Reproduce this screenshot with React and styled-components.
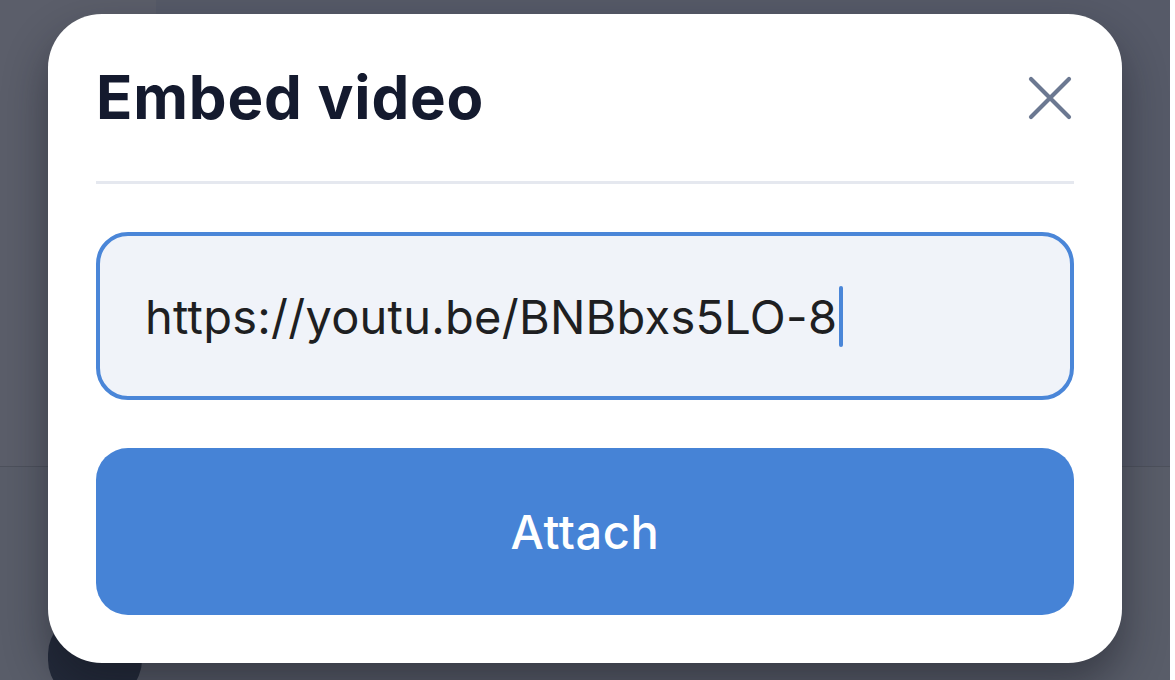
import React from 'react';
import styled, { createGlobalStyle } from 'styled-components';

const GlobalStyle = createGlobalStyle`
  html, body {
    margin: 0;
    padding: 0;
    background: #ffffff;
  }
  body {
    font-family: Inter, "Noto Sans", sans-serif;
    -webkit-font-smoothing: antialiased;
  }
`;

// the app behind the dimmed overlay
const Page = styled.div`
  position: relative;
  width: 1170px;
  height: 680px;
  overflow: hidden;
  display: grid;
  grid-template-rows: 466px 1fr;
  background: #585c69;
`;

const PageTop = styled.div`
  display: grid;
  grid-template-columns: 156px 1fr;
`;

const Sidebar = styled.div`
  background: #5b5e6a;
`;

const Content = styled.div`
  background: #565a68;
`;

const Toolbar = styled.div`
  border-top: 1px solid #4d515c;
  background: #595d69;
  display: flex;
  align-items: flex-end;
  padding: 0 0 0 48px;
`;

const ToolButton = styled.div`
  width: 94px;
  height: 86px;
  border-radius: 40px;
  margin-bottom: -20px;
  background: #232a3a;
`;

const Overlay = styled.div`
  position: absolute;
  inset: 0;
  padding: 14px 0 0 48px;
`;

const Modal = styled.div`
  width: 1074px;
  height: 649px;
  box-sizing: border-box;
  background: #ffffff;
  border-radius: 54px;
  padding: 48px;
  display: flex;
  flex-direction: column;
  box-shadow: 0 22px 44px rgba(18, 20, 28, 0.45);
`;

const Header = styled.div`
  display: flex;
  align-items: center;
  justify-content: space-between;
  height: 71px;
  padding-bottom: 48px;
  border-bottom: 3px solid #e5e8ef;
`;

const Title = styled.h2`
  margin: 0;
  font-size: 60px;
  line-height: 71px;
  font-weight: 700;
  color: #141a2e;
  letter-spacing: 0.8px;
`;

const CloseButton = styled.button`
  width: 48px;
  height: 48px;
  padding: 0;
  border: none;
  background: none;
  display: flex;
  align-items: center;
  justify-content: center;
  cursor: pointer;
`;

const Field = styled.div`
  margin-top: 48px;
  height: 168px;
  box-sizing: border-box;
  border: 4px solid #4a86d8;
  border-radius: 32px;
  background: #f0f3f9;
  padding: 0 45px;
  display: flex;
  align-items: center;
  font-size: 47px;
  letter-spacing: 0.25px;
  color: #1e1f22;
`;

const Caret = styled.span`
  display: inline-block;
  width: 4px;
  height: 61px;
  border-radius: 2px;
  background: #4a86d8;
  margin-left: 2px;
`;

const AttachButton = styled.button`
  margin-top: 48px;
  height: 167px;
  border: none;
  border-radius: 32px;
  background: #4683d6;
  color: #ffffff;
  font-family: Inter, "Noto Sans", sans-serif;
  font-size: 47px;
  font-weight: 500;
  letter-spacing: 0.6px;
  cursor: pointer;
`;

const CloseIcon = () => (
  <svg width="48" height="48" viewBox="0 0 48 48" fill="none">
    <path
      d="M5 5 L43 43 M43 5 L5 43"
      stroke="#6b7891"
      strokeWidth="4.2"
      strokeLinecap="round"
    />
  </svg>
);

export default function App() {
  return (
    <>
      <GlobalStyle />
      <Page>
        <PageTop>
          <Sidebar />
          <Content />
        </PageTop>
        <Toolbar>
          <ToolButton />
        </Toolbar>
        <Overlay>
          <Modal>
            <Header>
              <Title>Embed video</Title>
              <CloseButton aria-label="Close">
                <CloseIcon />
              </CloseButton>
            </Header>
            <Field>
              <span>https://youtu.be/BNBbxs5LO-8</span>
              <Caret />
            </Field>
            <AttachButton>Attach</AttachButton>
          </Modal>
        </Overlay>
      </Page>
    </>
  );
}
